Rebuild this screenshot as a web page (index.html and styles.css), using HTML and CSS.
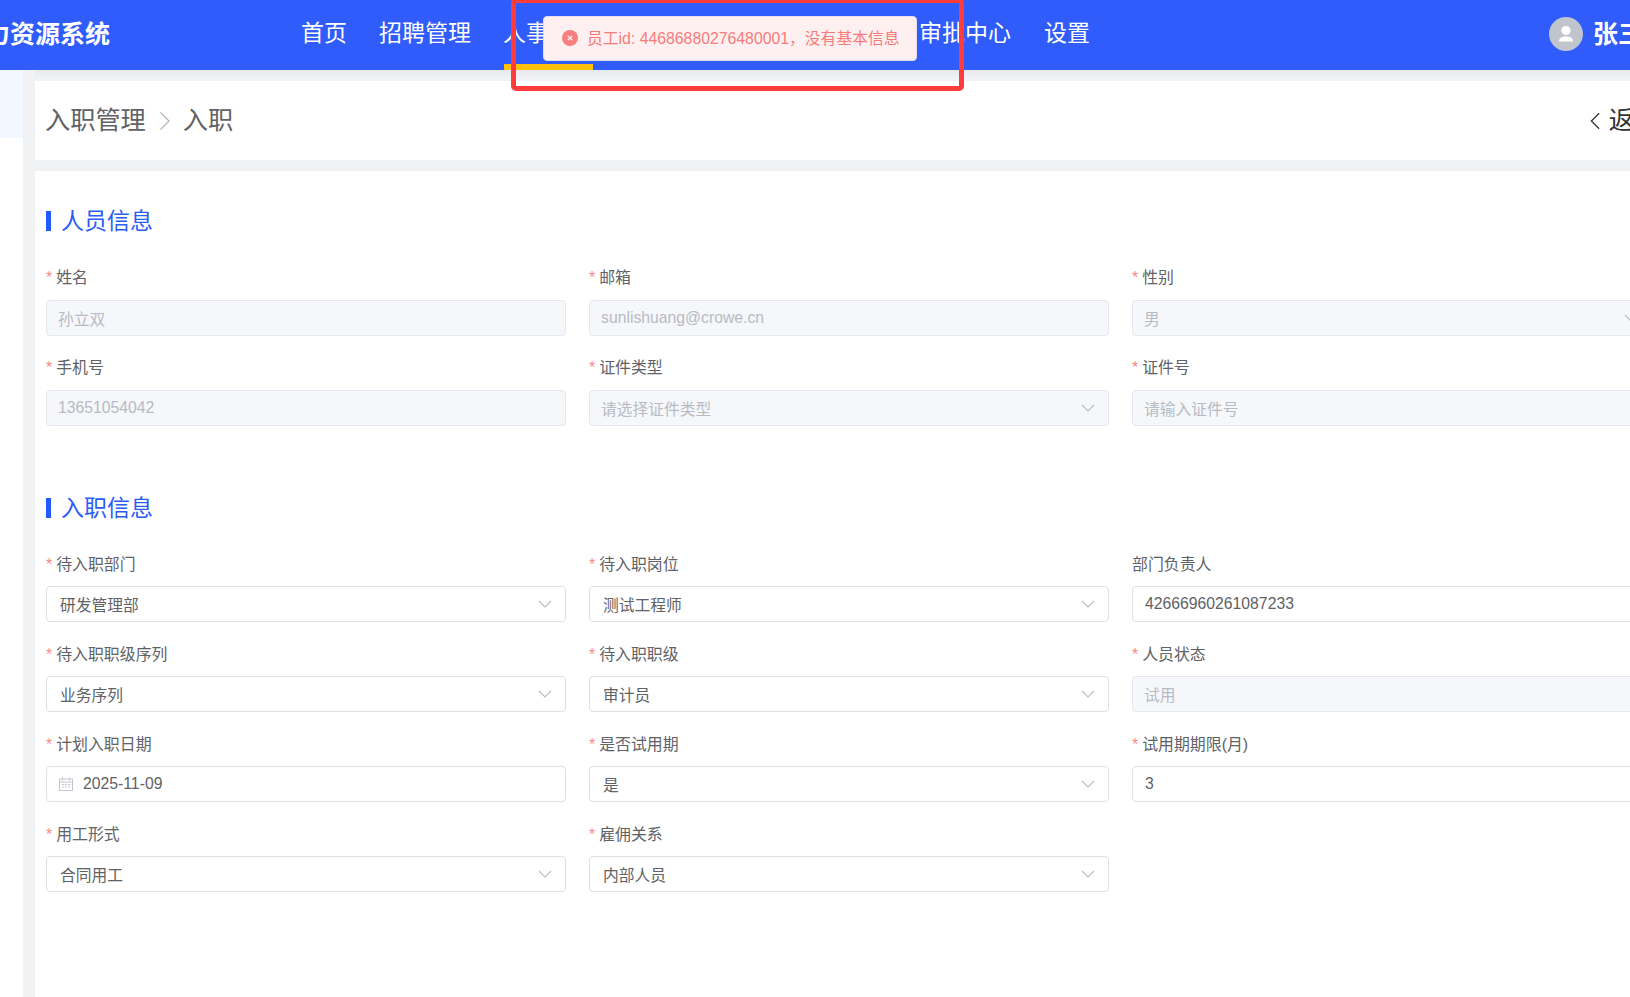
FILE: index.html
```html
<!DOCTYPE html>
<html lang="zh-CN">
<head>
<meta charset="utf-8">
<title>入职</title>
<link rel="stylesheet" href="styles.css">
</head>
<body>
<div class="app">
  <header class="topbar">
    <div class="logo">人力资源系统</div>
    <nav class="nav">
      <a class="nav-item">首页</a>
      <a class="nav-item">招聘管理</a>
      <a class="nav-item active">人事管理</a>
      <a class="nav-item nav-after-toast">审批中心</a>
      <a class="nav-item nav-last">设置</a>
    </nav>
    <div class="user">
      <span class="avatar">
        <svg viewBox="0 0 34 34" width="34" height="34"><circle cx="17" cy="13.5" r="4.6" fill="#fff"/><path d="M10 24.500c0-3.600 3-5 7-5s7 1.400 7 5z" fill="#fff"/></svg>
      </span>
      <span class="user-name">张三</span>
    </div>
  </header>
  <div class="body">
    <aside class="sidebar"><div class="side-active"></div></aside>
    <main class="main">
      <div class="crumb-card">
        <div class="crumbs">
          <span>入职管理</span>
          <svg class="crumb-sep" viewBox="0 0 12 20" width="12" height="20"><path d="M1.500 1.500 10 10l-8.500 8.500" fill="none" stroke="#b4b7bc" stroke-width="1.300"/></svg>
          <span>入职</span>
        </div>
        <div class="back">
          <svg class="back-icon" viewBox="0 0 12 20" width="11" height="20"><path d="M10 1.500 1.500 10l8.500 8.500" fill="none" stroke="#333" stroke-width="1.400"/></svg>
          <span>返回</span>
        </div>
      </div>
      <div class="form-card">
        <section class="section">
          <h2 class="section-title">人员信息</h2>
          <div class="form-grid">
            <div class="field"><label class="label req">姓名</label><div class="control disabled">孙立双</div></div>
            <div class="field"><label class="label req">邮箱</label><div class="control disabled">sunlishuang@crowe.cn</div></div>
            <div class="field"><label class="label req">性别</label><div class="control select disabled">男<svg class="arrow" viewBox="0 0 14 8" width="14" height="8"><path d="M1 1l6 6 6-6" fill="none" stroke="#b9bcc2" stroke-width="1.100"/></svg></div></div>
            <div class="field"><label class="label req">手机号</label><div class="control disabled">13651054042</div></div>
            <div class="field"><label class="label req">证件类型</label><div class="control select disabled">请选择证件类型<svg class="arrow" viewBox="0 0 14 8" width="14" height="8"><path d="M1 1l6 6 6-6" fill="none" stroke="#b9bcc2" stroke-width="1.100"/></svg></div></div>
            <div class="field"><label class="label req">证件号</label><div class="control disabled">请输入证件号</div></div>
          </div>
        </section>
        <section class="section section-second">
          <h2 class="section-title">入职信息</h2>
          <div class="form-grid">
            <div class="field"><label class="label req">待入职部门</label><div class="control select">研发管理部<svg class="arrow" viewBox="0 0 14 8" width="14" height="8"><path d="M1 1l6 6 6-6" fill="none" stroke="#b9bcc2" stroke-width="1.100"/></svg></div></div>
            <div class="field"><label class="label req">待入职岗位</label><div class="control select">测试工程师<svg class="arrow" viewBox="0 0 14 8" width="14" height="8"><path d="M1 1l6 6 6-6" fill="none" stroke="#b9bcc2" stroke-width="1.100"/></svg></div></div>
            <div class="field"><label class="label">部门负责人</label><div class="control">42666960261087233</div></div>
            <div class="field"><label class="label req">待入职职级序列</label><div class="control select">业务序列<svg class="arrow" viewBox="0 0 14 8" width="14" height="8"><path d="M1 1l6 6 6-6" fill="none" stroke="#b9bcc2" stroke-width="1.100"/></svg></div></div>
            <div class="field"><label class="label req">待入职职级</label><div class="control select">审计员<svg class="arrow" viewBox="0 0 14 8" width="14" height="8"><path d="M1 1l6 6 6-6" fill="none" stroke="#b9bcc2" stroke-width="1.100"/></svg></div></div>
            <div class="field"><label class="label req">人员状态</label><div class="control disabled">试用</div></div>
            <div class="field"><label class="label req">计划入职日期</label><div class="control date">
              <svg class="cal" viewBox="0 0 14 14" width="14" height="14"><path d="M.5 2h13v11.500H.5zM.5 5h13M3.500.5v3M10.500.5v3" fill="none" stroke="#c0c4cc"/><path d="M3 7.500h2M6 7.500h2M9 7.500h2M3 10h2M6 10h2M9 10h2" stroke="#c0c4cc"/></svg>
              2025-11-09</div></div>
            <div class="field"><label class="label req">是否试用期</label><div class="control select">是<svg class="arrow" viewBox="0 0 14 8" width="14" height="8"><path d="M1 1l6 6 6-6" fill="none" stroke="#b9bcc2" stroke-width="1.100"/></svg></div></div>
            <div class="field"><label class="label req">试用期期限(月)</label><div class="control">3</div></div>
            <div class="field"><label class="label req">用工形式</label><div class="control select">合同用工<svg class="arrow" viewBox="0 0 14 8" width="14" height="8"><path d="M1 1l6 6 6-6" fill="none" stroke="#b9bcc2" stroke-width="1.100"/></svg></div></div>
            <div class="field"><label class="label req">雇佣关系</label><div class="control select">内部人员<svg class="arrow" viewBox="0 0 14 8" width="14" height="8"><path d="M1 1l6 6 6-6" fill="none" stroke="#b9bcc2" stroke-width="1.100"/></svg></div></div>
          </div>
        </section>
      </div>
    </main>
  </div>
  <div class="toast">
    <svg class="toast-icon" viewBox="0 0 16 16" width="16" height="16"><circle cx="8" cy="8" r="8" fill="#f77f7f"/><path d="M5.800 5.800l4.400 4.400M10.200 5.800l-4.400 4.400" stroke="#fff" stroke-width="1.200"/></svg>
    <span>员工id: 44686880276480001，没有基本信息</span>
  </div>
  <div class="annotation"></div>
</div>
</body>
</html>
```
FILE: styles.css
```css
* { box-sizing: border-box; }
html, body { margin: 0; padding: 0; height: 100%; overflow: hidden; background: #fff; }
body { font-family: "Liberation Sans", "Noto Sans CJK SC", sans-serif; }

.app { position: relative; width: 1630px; height: 997px; overflow: hidden; }

.topbar { display: flex; align-items: center; width: 1650px; height: 70px; background: #2f5cfa; color: #fff; }
.logo { margin-left: -40px; width: 150px; flex: none; padding-bottom: 7px; font-size: 25px; font-weight: 700; white-space: nowrap; }
.nav { display: flex; margin-left: 191px; height: 70px; }
.nav-item { position: relative; display: flex; align-items: center; height: 70px; margin-right: 32px; padding-bottom: 9px; font-size: 23px; white-space: nowrap; }
.nav-item.active { margin-right: 32px; }
.nav-item.active::after { content: ""; position: absolute; left: 1px; right: 2px; bottom: 0; height: 6px; background: #ffc107; }
.nav-after-toast { margin-left: 292px; }
.nav-last { margin-left: 1px; }
.user { display: flex; align-items: center; margin-left: auto; gap: 10px; flex: none; width: 101px; padding-bottom: 2px; }
.avatar { display: block; width: 34px; height: 34px; border-radius: 50%; background: #c0c4cc; flex: none; }
.avatar svg { display: block; }
.user-name { padding-bottom: 4px; font-size: 25px; font-weight: 700; white-space: nowrap; }

.body { display: flex; height: 927px; background: #f1f2f4; }
.sidebar { width: 23px; flex: none; background: #fff; }
.side-active { height: 68px; background: #f3f7ff; }
.main { flex: none; width: 1640px; margin-left: 12px; padding-top: 11px; background: linear-gradient(#e6e8ec, #f1f2f4 8px); }

.crumb-card { display: flex; align-items: center; justify-content: space-between; height: 79px; padding: 0 16px 6px 10px; background: #fff; }
.crumbs { display: flex; align-items: center; font-size: 25.2px; color: #606266; }
.crumb-sep { margin: 6px 12px 0 13px; }
.back { display: flex; align-items: center; gap: 8px; font-size: 25.2px; color: #333; }
.back-icon { margin-top: 6px; }

.form-card { margin-top: 11px; height: 826px; padding: 38px 11px 0; background: #fff; }
.section-title { display: flex; align-items: center; gap: 10px; margin: 0 0 34px; height: 24px; font-size: 23px; line-height: 24px; font-weight: 400; color: #2a5cf6; }
.section-title::before { content: ""; display: block; width: 5px; height: 20px; background: #1f5bff; }
.section-second { margin-top: 70px; }
.section-second .form-grid { row-gap: 22px; }
.section-second .label { margin-bottom: 10px; }

.form-grid { display: grid; grid-template-columns: 520px 520px 520px; column-gap: 23px; row-gap: 21px; }
.label { display: block; height: 22px; margin-bottom: 11px; font-size: 15.9px; line-height: 22px; color: #606266; white-space: nowrap; }
.label.req::before { content: "*"; color: #f78a8a; margin-right: 4px; }

.control { position: relative; display: flex; align-items: center; height: 36px; padding: 0 12px; border: 1px solid #dcdfe6; border-radius: 4px; font-size: 15.75px; color: #606266; background: #fff; white-space: nowrap; }
.control.select { padding-left: 13px; }
.control.disabled { padding-left: 11px; background: #f5f7fa; border-color: #e4e7ed; color: #b8bbc2; }
.arrow { position: absolute; right: 13px; top: 13px; }
.cal { margin-right: 10px; flex: none; }

.toast { position: absolute; left: 543px; top: 16px; display: flex; align-items: center; width: 374px; height: 45px; padding: 0 0 2px 18px; gap: 9px; background: #fef0f0; border: 1px solid #e5dbe9; border-radius: 4px; color: #f67c7c; font-size: 15.8px; white-space: nowrap; }
.toast-icon { flex: none; }

.annotation { position: absolute; left: 511px; top: -2px; width: 453px; height: 93px; border: 5px solid #ff3b3b; border-radius: 5px; }
```
